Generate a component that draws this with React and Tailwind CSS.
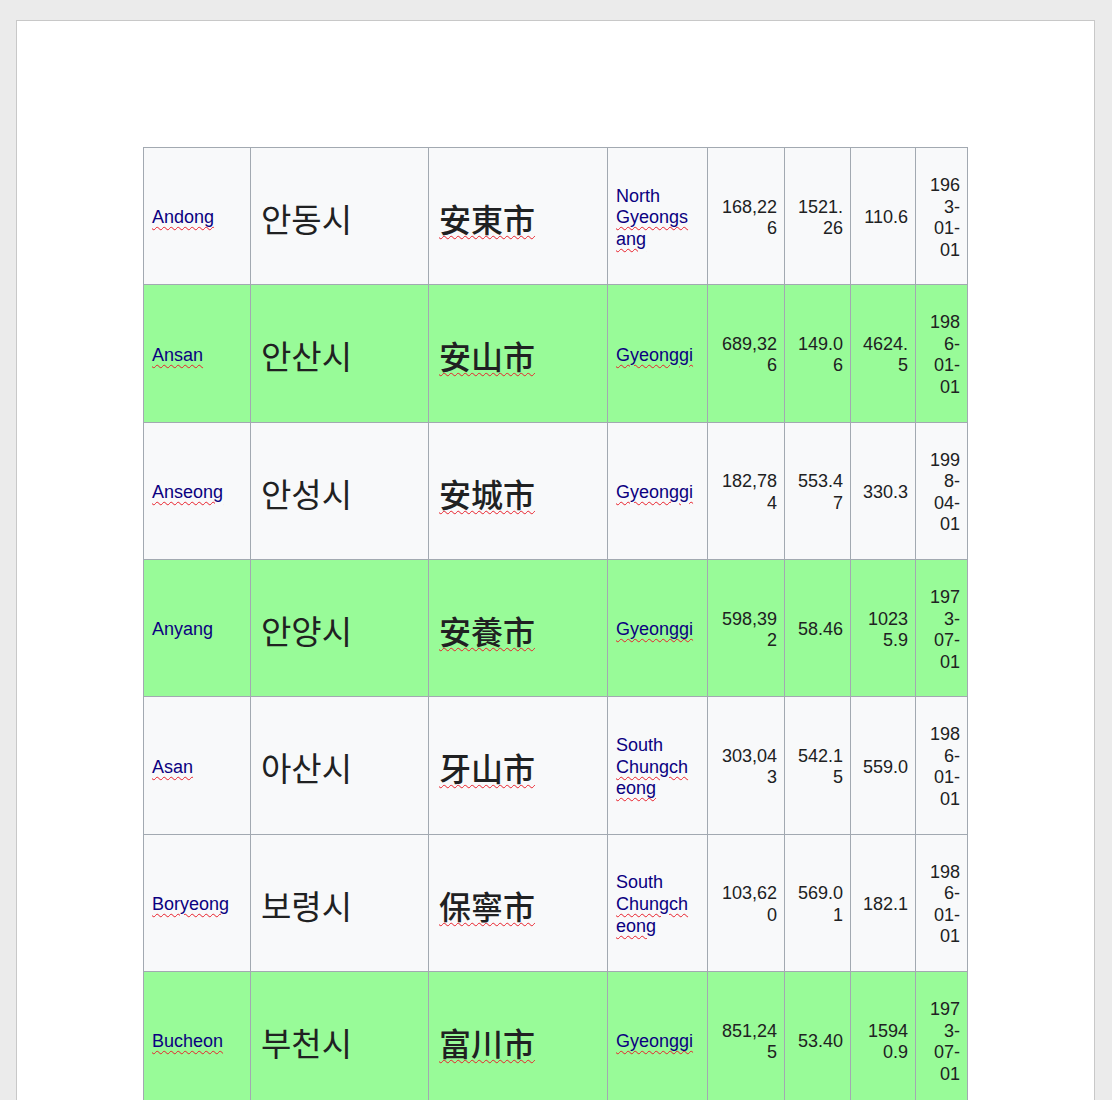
import React from "react";

const rows = [
  { en: "Andong", ko: "안동시", hanja: "安東市", prov: "North Gyeongsang", pop: "168,226", area: "1521.26", dens: "110.6", date: "1963-01-01", green: false, spell: true },
  { en: "Ansan", ko: "안산시", hanja: "安山市", prov: "Gyeonggi", pop: "689,326", area: "149.06", dens: "4624.5", date: "1986-01-01", green: true, spell: true },
  { en: "Anseong", ko: "안성시", hanja: "安城市", prov: "Gyeonggi", pop: "182,784", area: "553.47", dens: "330.3", date: "1998-04-01", green: false, spell: true },
  { en: "Anyang", ko: "안양시", hanja: "安養市", prov: "Gyeonggi", pop: "598,392", area: "58.46", dens: "10235.9", date: "1973-07-01", green: true, spell: false },
  { en: "Asan", ko: "아산시", hanja: "牙山市", prov: "South Chungcheong", pop: "303,043", area: "542.15", dens: "559.0", date: "1986-01-01", green: false, spell: true },
  { en: "Boryeong", ko: "보령시", hanja: "保寧市", prov: "South Chungcheong", pop: "103,620", area: "569.01", dens: "182.1", date: "1986-01-01", green: false, spell: true },
  { en: "Bucheon", ko: "부천시", hanja: "富川市", prov: "Gyeonggi", pop: "851,245", area: "53.40", dens: "15940.9", date: "1973-07-01", green: true, spell: true },
];

const squiggle = "underline decoration-wavy decoration-[#e8202a] decoration-1 underline-offset-[3px]";

// first word of the province gets no squiggle (North / South)
const Province = ({ name }) => {
  const parts = name.split(" ");
  if (parts.length === 1) return <span className={squiggle}>{name}</span>;
  return (
    <>
      <span>{parts[0]}</span> <span className={squiggle}>{parts[1]}</span>
    </>
  );
};

export default function App() {
  const cell = "border border-[#a2a9b1] align-middle pl-2 pt-1 [overflow-wrap:anywhere]";

  return (
    <div className="min-h-[1100px] bg-[#ebebeb] pt-5 pl-4 pr-[17px] font-['Liberation_Sans',Arial,sans-serif]">
      <div className="min-h-[1080px] bg-white border border-[#c8c8c8] border-b-0 pt-[126px] pl-[126px]">
        <table className="table-fixed border-collapse w-[825px] text-[18px] leading-[21.6px] text-[#202122]">
          <colgroup>
            <col className="w-[107px]" />
            <col className="w-[178px]" />
            <col className="w-[179px]" />
            <col className="w-[100px]" />
            <col className="w-[77px]" />
            <col className="w-[66px]" />
            <col className="w-[65px]" />
            <col className="w-[52px]" />
          </colgroup>
          <tbody>
            {rows.map((r) => (
              <tr key={r.en} className={`h-[137.33px] ${r.green ? "bg-[#98fb98]" : "bg-[#f8f9fa]"}`}>
                <td className={`${cell} pr-2`}>
                  <span className={`text-[#0b0080] ${r.spell ? squiggle : ""}`}>{r.en}</span>
                </td>
                <td className={`${cell} pl-[10px] text-[33px] leading-[40px] font-['Noto_Sans_CJK_KR',sans-serif]`}>
                  {r.ko}
                </td>
                <td className={`${cell} pl-[10px] text-[32px] leading-[40px] font-medium font-['Noto_Sans_CJK_TC',sans-serif]`}>
                  <span className={squiggle}>{r.hanja}</span>
                </td>
                <td className={`${cell} pr-[12px] text-[#0b0080]`}>
                  <Province name={r.prov} />
                </td>
                <td className={`${cell} text-right pr-[7px]`}>{r.pop}</td>
                <td className={`${cell} text-right pr-[7px]`}>{r.area}</td>
                <td className={`${cell} text-right pr-[7px]`}>{r.dens}</td>
                <td className={`${cell} text-right pr-[7px]`}>{r.date}</td>
              </tr>
            ))}
          </tbody>
        </table>
      </div>
    </div>
  );
}
